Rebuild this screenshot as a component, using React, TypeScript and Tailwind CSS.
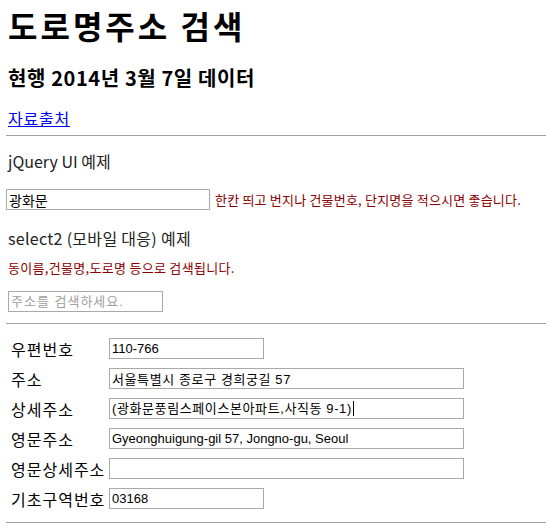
const rows = [
  { label: "우편번호", value: "110-766", wide: false },
  { label: "주소", value: "서울특별시 종로구 경희궁길 57", wide: true, hangul: true },
  { label: "상세주소", value: "(광화문풍림스페이스본아파트,사직동 9-1)", wide: true, focused: true, hangul: true },
  { label: "영문주소", value: "Gyeonghuigung-gil 57, Jongno-gu, Seoul", wide: true },
  { label: "영문상세주소", value: "", wide: true },
  { label: "기초구역번호", value: "03168", wide: false },
];

const field =
  "h-[21px] border border-[#a9a9a9] bg-white px-[2px] text-[13px] leading-[19px] text-black font-['Liberation_Sans','Noto_Sans_CJK_KR',sans-serif] outline-none";

export default function App() {
  return (
    <main className="min-h-screen bg-white text-black font-['Noto_Sans_CJK_KR','Liberation_Sans',sans-serif]">
      <section className="pl-2">
        <h1 className="pt-[7px] text-[32px] font-bold leading-[36px] tracking-[3px]">도로명주소 검색</h1>
        <h2 className="mt-[23px] text-[20px] font-bold leading-[24px] tracking-[0.6px]">현행 2014년 3월 7일 데이터</h2>
        <a href="#" className="mt-[18px] block w-fit text-[16px] leading-[20px] tracking-[0.75px] text-[#0000ee] underline">
          자료출처
        </a>
      </section>

      <hr className="ml-[6px] mt-[7px] border-0 border-t border-[#a0a0a0]" />

      <section className="pl-2">
        <p className="mt-[15px] text-[16px] leading-[20px] text-[#222]">jQuery UI 예제</p>
        <div className="mt-[18px] -ml-[2px] flex items-center gap-[5px]">
          <input readOnly value="광화문" className={`${field} w-[204px] text-[14px]`} />
          <span className="text-[13px] leading-[16px] tracking-[0.2px] text-[#8b0000]">
            한칸 띄고 번지나 건물번호, 단지명을 적으시면 좋습니다.
          </span>
        </div>
        <p className="mt-[18px] text-[16px] leading-[20px] tracking-[0.3px] text-[#222]">select2 (모바일 대응) 예제</p>
        <p className="mt-[12px] text-[13px] leading-[16px] tracking-[0.3px] text-[#8b0000]">동이름,건물명,도로명 등으로 검색됩니다.</p>
        <input
          readOnly
          placeholder="주소를 검색하세요."
          className={`${field} mt-[15px] block w-[155px] tracking-[1px] placeholder:text-[#a0a0a0]`}
        />
      </section>

      <hr className="ml-[6px] mt-[11px] border-0 border-t border-[#a0a0a0]" />

      <section className="mt-[14px] flex flex-col gap-[9px] pl-[11px]">
        {rows.map((row) => (
          <div key={row.label} className="flex items-center">
            <span className="w-[98px] text-[16px] leading-[20px] tracking-[1px]">{row.label}</span>
            {row.focused ? (
              <div className={`${field} flex w-[355px] items-center border-[#7aa5d8] tracking-[0.6px]`}>
                <span>{row.value}</span>
                <span className="ml-px h-[15px] w-px bg-black" />
              </div>
            ) : (
              <input
                readOnly
                value={row.value}
                className={`${field} ${row.wide ? "w-[355px]" : "w-[155px]"} ${row.hangul ? "tracking-[0.6px]" : ""}`}
              />
            )}
          </div>
        ))}
      </section>

      <hr className="ml-[6px] mt-[13px] border-0 border-t border-[#a0a0a0]" />
    </main>
  );
}
